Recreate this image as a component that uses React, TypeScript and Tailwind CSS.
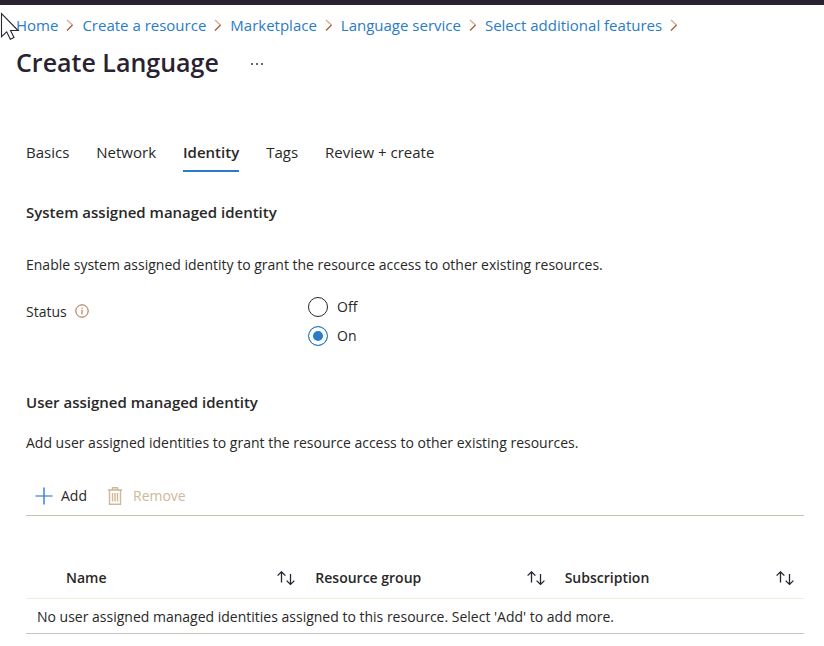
import { useState } from "react";

const crumbs = [
  "Home",
  "Create a resource",
  "Marketplace",
  "Language service",
  "Select additional features",
];

const tabs = ["Basics", "Network", "Identity", "Tags", "Review + create"];

const columns = ["Name", "Resource group", "Subscription"];

function Chevron() {
  return (
    <svg className="h-3 w-2 shrink-0" viewBox="0 0 8 12" fill="none" aria-hidden="true">
      <path d="M1 1l5.5 5" stroke="#c9ab8f" strokeWidth="1.2" />
      <path d="M6.5 6L1 11.5" stroke="#a05a30" strokeWidth="1.2" />
    </svg>
  );
}

function InfoIcon() {
  return (
    <svg className="size-3.5" viewBox="0 0 14 14" fill="none" stroke="#a8643c" aria-hidden="true">
      <circle cx="7" cy="7" r="6.2" />
      <path d="M7 3.6v1.2M7 5.8v4.6" />
    </svg>
  );
}

function PlusIcon() {
  return (
    <svg className="h-[18px] w-[18px]" viewBox="0 0 18 18" aria-hidden="true">
      <path d="M.5 9h17" stroke="#5ea3e6" strokeWidth="1.6" />
      <path d="M9 .5v17" stroke="#3f8bd6" strokeWidth="1.6" />
    </svg>
  );
}

function TrashIcon() {
  return (
    <svg className="h-[18px] w-4" viewBox="0 0 16 18" fill="none" stroke="#cdb897" aria-hidden="true">
      <path d="M1 3h14" strokeWidth="1.6" />
      <path d="M5.5 3V.8h5V3" strokeWidth="1.4" />
      <path d="M2.5 3v14.3h11V3" strokeWidth="1.4" />
      <path d="M5.5 6v8.5M8 6v8.5M10.5 6v8.5" strokeWidth="1.4" />
    </svg>
  );
}

function SortIcon() {
  return (
    <svg className="h-3.5 w-[18px]" viewBox="0 0 18 14" fill="none" stroke="#292230" strokeWidth="1.3" aria-hidden="true">
      <path d="M4.5 11.5V1M.6 4.6L4.5.8l3.9 3.8" />
      <path d="M13.5 3v10.5M9.6 9.6l3.9 3.8 3.9-3.8" />
    </svg>
  );
}

function Pointer() {
  return (
    <svg className="pointer-events-none absolute top-3 left-0 h-7 w-5" viewBox="0 0 20 28" aria-hidden="true">
      <path
        d="M1.5 1.5v23.2l5.2-4.9 3.6 7.4 3.7-1.7-3.5-7h7.6z"
        fill="#fff"
        stroke="#292230"
        strokeWidth="1.1"
      />
    </svg>
  );
}

export default function App() {
  const [status, setStatus] = useState("On");

  return (
    <div className="relative bg-white font-['Open_Sans','Noto_Sans',sans-serif] text-sm leading-5 text-[#292827]">
      <div className="h-[5px] bg-[#292230]" />

      <header className="pl-4">
        <nav aria-label="Breadcrumb" className="pt-2.5">
          <ol className="flex items-center gap-2 text-[15px] text-[#2a7bc8]">
            {crumbs.map((crumb) => (
              <li key={crumb} className="flex items-center gap-2 whitespace-nowrap">
                <a href="#">{crumb}</a>
                <Chevron />
              </li>
            ))}
          </ol>
        </nav>
        <div className="flex items-center gap-8 pt-[11px]">
          <h1 className="text-[25px] leading-8 font-semibold text-[#292230]">Create Language</h1>
          <button type="button" aria-label="More actions" className="flex gap-[3px] pt-1">
            <span className="size-0.5 bg-[#6b6368]" />
            <span className="size-0.5 bg-[#6b6368]" />
            <span className="size-0.5 bg-[#6b6368]" />
          </button>
        </div>
      </header>

      <main className="pr-5 pl-[26px]">
        <div role="tablist" className="flex gap-[27px] pt-16 text-[15px]">
          {tabs.map((tab) => (
            <button
              key={tab}
              type="button"
              role="tab"
              aria-selected={tab === "Identity"}
              className="border-b-2 border-transparent pb-2 whitespace-nowrap aria-selected:border-[#2a7bc8] aria-selected:font-semibold"
            >
              {tab}
            </button>
          ))}
        </div>

        <section className="pt-[30px]">
          <h2 className="text-[15px] font-semibold">System assigned managed identity</h2>
          <p className="pt-[33px]">
            Enable system assigned identity to grant the resource access to other existing resources.
          </p>
          <div role="radiogroup" aria-labelledby="status-label" className="flex pt-[22px]">
            <div className="flex w-[282px] items-start gap-2 pt-[5px]">
              <span id="status-label">Status</span>
              <button type="button" aria-label="About status" className="pt-0.5">
                <InfoIcon />
              </button>
            </div>
            <div className="flex flex-col gap-[9px]">
              {["Off", "On"].map((option) => (
                <label key={option} className="flex items-center gap-[9px]">
                  <input
                    type="radio"
                    name="status"
                    value={option}
                    checked={status === option}
                    onChange={() => setStatus(option)}
                    className="size-5 appearance-none rounded-full border border-[#292230] checked:border-[#2a7bc8] checked:bg-[#2a7bc8] checked:shadow-[inset_0_0_0_4px_#fff]"
                  />
                  {option}
                </label>
              ))}
            </div>
          </div>
        </section>

        <section className="pt-[46px]">
          <h2 className="text-[15px] font-semibold">User assigned managed identity</h2>
          <p className="pt-[21px]">
            Add user assigned identities to grant the resource access to other existing resources.
          </p>

          <div className="mt-[33px] flex gap-5 border-b border-[#c9c0b4] pb-[9px] pl-[9px]">
            <button type="button" className="flex items-center gap-2">
              <PlusIcon />
              Add
            </button>
            <button type="button" disabled className="flex items-center gap-2.5 text-[#cdb897]">
              <TrashIcon />
              Remove
            </button>
          </div>

          <table className="mt-10 w-full table-fixed text-left">
            <colgroup>
              <col className="w-[30px]" />
              <col />
              <col />
              <col />
            </colgroup>
            <thead>
              <tr className="border-b border-[#f3eeda]">
                <td />
                {columns.map((column) => (
                  <th key={column} scope="col" className="px-2.5 pt-3 pb-2.5 font-semibold">
                    <div className="flex items-center justify-between">
                      {column}
                      <button type="button" aria-label={"Sort by " + column}>
                        <SortIcon />
                      </button>
                    </div>
                  </th>
                ))}
              </tr>
            </thead>
            <tbody>
              <tr className="border-b border-[#c9c6bf]">
                <td colSpan={4} className="px-[11px] pt-2 pb-1.5">
                  No user assigned managed identities assigned to this resource. Select 'Add' to add more.
                </td>
              </tr>
            </tbody>
          </table>
        </section>
      </main>

      <Pointer />
    </div>
  );
}
